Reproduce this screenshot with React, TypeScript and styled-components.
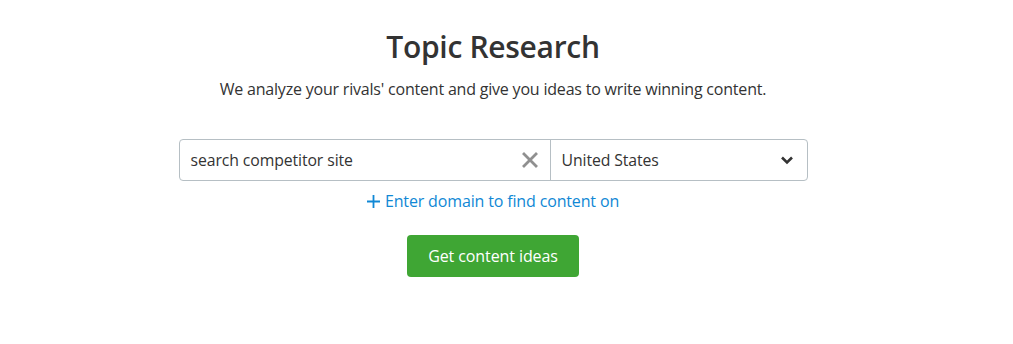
import styled, { createGlobalStyle } from "styled-components";

const GlobalStyle = createGlobalStyle`
  html, body {
    margin: 0;
    padding: 0;
    background: #ffffff;
  }
  body {
    font-family: "Open Sans", "Noto Sans", Arial, sans-serif;
    color: #333333;
  }
`;

const Page = styled.div`
  width: 986px;
  height: 344px;
  display: flex;
  flex-direction: column;
  align-items: center;
  padding-top: 27px;
  box-sizing: border-box;
`;

const Title = styled.h1`
  margin: 0;
  font-size: 30px;
  font-weight: 600;
  line-height: 40px;
  color: #333333;
  letter-spacing: -0.3px;
`;

const Subtitle = styled.p`
  margin: 11px 0 0;
  font-size: 16px;
  line-height: 22px;
  color: #333333;
  letter-spacing: -0.2px;
`;

const SearchRow = styled.div`
  display: flex;
  width: 629px;
  height: 42px;
  margin-top: 39px;
  border: 1px solid #b6bfc4;
  border-radius: 4px;
  box-sizing: border-box;
`;

const Field = styled.div<{ $width: number; $divider?: boolean }>`
  display: flex;
  align-items: center;
  width: ${(p) => p.$width}px;
  padding: 0 10px 0 11px;
  box-sizing: border-box;
  border-right: ${(p) => (p.$divider ? "1px solid #b6bfc4" : "none")};
  font-size: 15.8px;
  color: #333333;
`;

const FieldText = styled.span`
  flex: 1;
  letter-spacing: -0.1px;
`;

const IconButton = styled.span`
  display: flex;
  align-items: center;
  justify-content: center;
  width: 20px;
  height: 20px;
`;

const AddLink = styled.a`
  display: flex;
  align-items: center;
  gap: 5px;
  margin-top: 9px;
  font-size: 16px;
  line-height: 22px;
  color: #1088d5;
  letter-spacing: -0.15px;
  cursor: pointer;
`;

const GreenButton = styled.button`
  margin-top: 23px;
  width: 172px;
  height: 42px;
  border: none;
  border-radius: 4px;
  background: #3fa634;
  color: #ffffff;
  font-family: inherit;
  font-size: 16px;
  font-weight: 500;
  letter-spacing: -0.1px;
  cursor: pointer;
`;

export default function App() {
  return (
    <>
      <GlobalStyle />
      <Page>
        <Title>Topic Research</Title>
        <Subtitle>
          We analyze your rivals' content and give you ideas to write winning content.
        </Subtitle>
        <SearchRow>
          <Field $width={371} $divider>
            <FieldText>search competitor site</FieldText>
            <IconButton>
              <svg width="16" height="16" viewBox="0 0 16 16">
                <path
                  d="M2 2 L14 14 M14 2 L2 14"
                  stroke="#909090"
                  strokeWidth="2.8"
                  strokeLinecap="square"
                />
              </svg>
            </IconButton>
          </Field>
          <Field $width={256}>
            <FieldText>United States</FieldText>
            <IconButton>
              <svg width="14" height="10" viewBox="0 0 14 10">
                <path
                  d="M2 2.5 L7 7.5 L12 2.5"
                  stroke="#333333"
                  strokeWidth="2.6"
                  fill="none"
                />
              </svg>
            </IconButton>
          </Field>
        </SearchRow>
        <AddLink>
          <svg width="13" height="13" viewBox="0 0 13 13">
            <path d="M6.5 0 V13 M0 6.5 H13" stroke="#1088d5" strokeWidth="1.8" />
          </svg>
          Enter domain to find content on
        </AddLink>
        <GreenButton>Get content ideas</GreenButton>
      </Page>
    </>
  );
}
